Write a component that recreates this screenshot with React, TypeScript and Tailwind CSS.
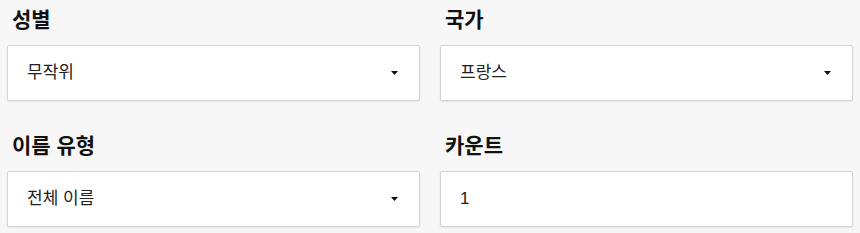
import React from "react"

interface FieldProps {
  label: string
  value: string
  select?: boolean
}

function Field({ label, value, select }: FieldProps) {
  return (
    <div className="flex flex-col">
      <label className="text-[21px] leading-[28px] font-bold text-[#111] mb-[11px] pl-[5px]">{label}</label>
      <div className="h-[56px] bg-white border border-[#d4d4d4] rounded-[2px] shadow-[0_1px_2px_rgba(0,0,0,0.08)] flex items-center justify-between pl-[19px] pr-[21px]">
        <span className="text-[17px] text-[#222]">{value}</span>
        {select && (
          <svg width="7" height="4" viewBox="0 0 7 4" className="block">
            <path d="M0 0h7L3.5 4z" fill="#111" />
          </svg>
        )}
      </div>
    </div>
  )
}

export default function App() {
  return (
    <div
      className="w-[860px] h-[233px] bg-[#f7f7f7] px-[7px] pt-[6px] overflow-hidden"
      style={{ fontFamily: '"Liberation Sans", "Noto Sans CJK KR", sans-serif' }}
    >
      <div className="grid grid-cols-2 gap-x-[20px] gap-y-[31px]">
        <Field label="성별" value="무작위" select />
        <Field label="국가" value="프랑스" select />
        <Field label="이름 유형" value="전체 이름" select />
        <Field label="카운트" value="1" />
      </div>
    </div>
  )
}
